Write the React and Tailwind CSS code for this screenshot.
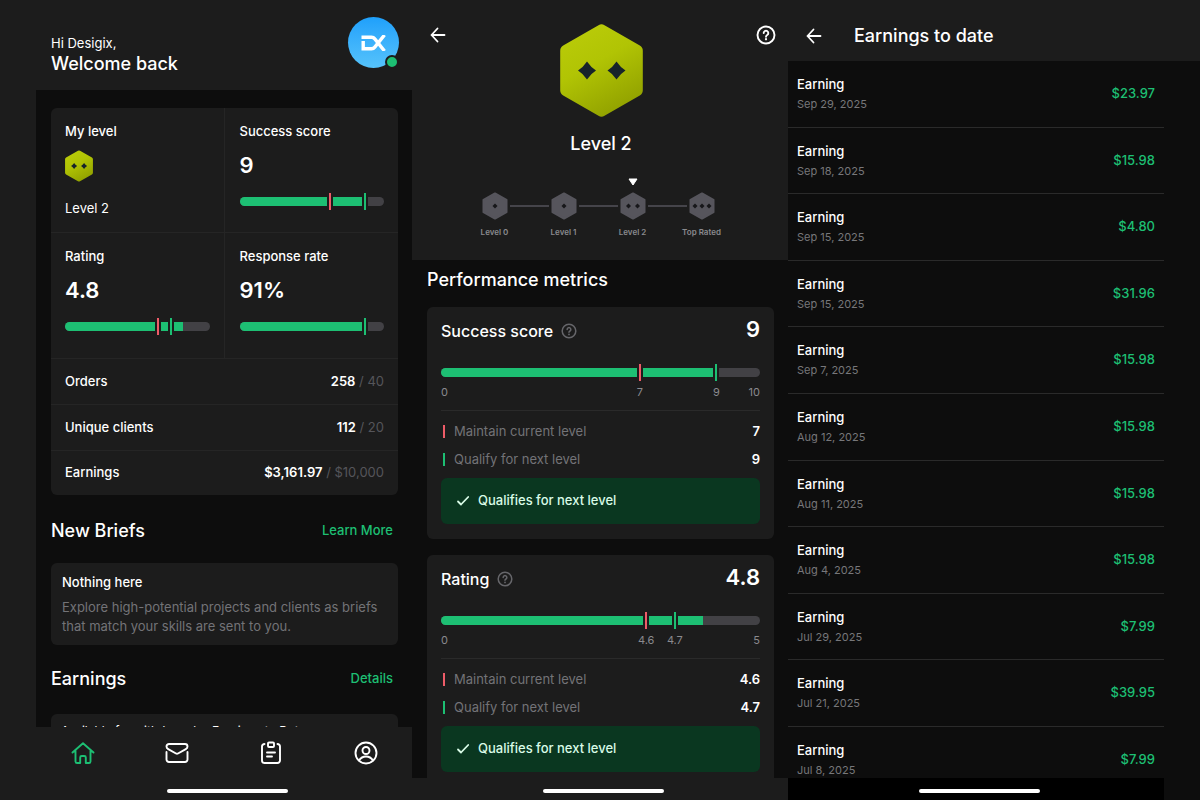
import React from 'react';

const overviewStats = [
  { label: 'Success score', value: '9', fill: 86, red: 62, green: 86 },
  { label: 'Rating', value: '4.8', fill: 82, red: 64, green: 73 },
  { label: 'Response rate', value: '91%', fill: 86, green: 86 },
];

const totals = [
  { label: 'Orders', value: '258', goal: '40' },
  { label: 'Unique clients', value: '112', goal: '20' },
  { label: 'Earnings', value: '$3,161.97', goal: '$10,000' },
];

const levels = [
  { label: 'Level 0', dots: 1 },
  { label: 'Level 1', dots: 1 },
  { label: 'Level 2', dots: 2, current: true },
  { label: 'Top Rated', dots: 3 },
];

const metrics = [
  { label: 'Success score', value: '9', max: '10', fill: 86, red: 62, redLabel: '7', green: 86, greenLabel: '9' },
  { label: 'Rating', value: '4.8', max: '5', fill: 82, red: 64, redLabel: '4.6', green: 73, greenLabel: '4.7' },
];

const earnings = [
  { date: 'Sep 29, 2025', amount: '$23.97' },
  { date: 'Sep 18, 2025', amount: '$15.98' },
  { date: 'Sep 15, 2025', amount: '$4.80' },
  { date: 'Sep 15, 2025', amount: '$31.96' },
  { date: 'Sep 7, 2025', amount: '$15.98' },
  { date: 'Aug 12, 2025', amount: '$15.98' },
  { date: 'Aug 11, 2025', amount: '$15.98' },
  { date: 'Aug 4, 2025', amount: '$15.98' },
  { date: 'Jul 29, 2025', amount: '$7.99' },
  { date: 'Jul 21, 2025', amount: '$39.95' },
  { date: 'Jul 8, 2025', amount: '$7.99' },
];

function LevelBadge({ className }) {
  return (
    <svg viewBox="0 0 83 93" className={className} aria-hidden="true">
      <defs>
        <linearGradient id="badge" x1="0" y1="0" x2="0.5" y2="1">
          <stop offset="0" stopColor="#bccd0a" />
          <stop offset="0.5" stopColor="#b1c404" />
          <stop offset="1" stopColor="#94a400" />
        </linearGradient>
      </defs>
      <path
        d="M38.5 1.2a6 6 0 0 1 6 0L79.8 21.5a6 6 0 0 1 3 5.2V66.3a6 6 0 0 1-3 5.2L44.5 91.8a6 6 0 0 1-6 0L3.2 71.5a6 6 0 0 1-3-5.2V26.7a6 6 0 0 1 3-5.2Z"
        fill="url(#badge)"
      />
      <g fill="#17242a">
        <path d="M27 37.5Q31 43.5 36 46.5Q31 49.5 27 55.5Q23 49.5 18 46.5Q23 43.5 27 37.5Z" />
        <path d="M56.5 37.5Q60.5 43.5 65.5 46.5Q60.5 49.5 56.5 55.5Q52.5 49.5 47.5 46.5Q52.5 43.5 56.5 37.5Z" />
      </g>
    </svg>
  );
}

function StepBadge({ dots }) {
  const xs = { 1: [13], 2: [8.5, 17.5], 3: [6, 13, 20] }[dots];
  return (
    <svg viewBox="0 0 26 28" className="h-7 w-[26px]" aria-hidden="true">
      <path d="M13 1.5 24.5 7.8V20.2L13 26.5 1.5 20.2V7.8Z" fill="#56555c" stroke="#56555c" strokeWidth="2" strokeLinejoin="round" />
      {xs.map((x) => (
        <path key={x} d={`M${x} 11.5l2.5 2.5-2.5 2.5-2.5-2.5Z`} fill="#17171a" />
      ))}
    </svg>
  );
}

function ArrowIcon() {
  return (
    <svg viewBox="0 0 16 16" className="size-4" fill="none" stroke="currentColor" strokeWidth="1.8" strokeLinecap="round" strokeLinejoin="round" aria-hidden="true">
      <path d="M14.5 8H1.5M7.5 1.5 1.5 8 7.5 14.5" />
    </svg>
  );
}

function HelpIcon({ className }) {
  return (
    <svg viewBox="0 0 20 20" className={className} fill="none" stroke="currentColor" strokeWidth="1.9" strokeLinecap="round" strokeLinejoin="round" aria-hidden="true">
      <circle cx="10" cy="10" r="8.5" />
      <path d="M7.7 8a2.3 2.3 0 1 1 3.5 2c-.8.5-1.2.9-1.2 1.7" />
      <path d="M10 14.2v.1" strokeWidth="2.2" />
    </svg>
  );
}

function NavIcon({ children }) {
  return (
    <svg viewBox="0 0 24 24" className="size-6" fill="none" stroke="currentColor" strokeWidth="1.9" strokeLinecap="round" strokeLinejoin="round" aria-hidden="true">
      {children}
    </svg>
  );
}

function Marker({ at, color, label }) {
  return (
    <div className="absolute -top-1 -ml-0.5 flex w-1.5 flex-col items-center" style={{ left: `${at}%` }}>
      <div className="h-[17px] w-1.5 bg-[#1c1c1c] px-0.5">
        <div className={`h-full ${color}`} />
      </div>
      {label && <span className="mt-[3px] text-[11px] leading-4 text-[#8a8a8e]">{label}</span>}
    </div>
  );
}

function Meter({ fill, red, green, redLabel, greenLabel }) {
  return (
    <div className="relative h-[9px]">
      <div className="h-full overflow-hidden rounded-full bg-[#424145]">
        <div className="h-full bg-[#1dbf73]" style={{ width: `${fill}%` }} />
      </div>
      {red && <Marker at={red} color="bg-[#ee5c68]" label={redLabel} />}
      <Marker at={green} color="bg-[#1dbf73]" label={greenLabel} />
    </div>
  );
}

function HomeIndicator() {
  return <div className="ml-1.5 h-1 w-[121px] rounded-full bg-white" />;
}

function StatCell({ stat, className }) {
  return (
    <div className={`pt-3.5 pr-3.5 ${className}`}>
      <h3 className="text-[13px] leading-[18px] font-medium">{stat.label}</h3>
      <p className="mt-2.5 text-[22px] leading-[30px] font-semibold">{stat.value}</p>
      <div className="mt-[17px]">
        <Meter {...stat} />
      </div>
    </div>
  );
}

function OverviewScreen() {
  return (
    <section className="flex min-w-0 flex-1 flex-col">
      <header className="flex h-[90px] shrink-0 items-start justify-between pr-[13px] pl-[15px]">
        <div className="pt-[34px]">
          <p className="text-[13px] leading-[18px]">Hi Desigix,</p>
          <h1 className="text-lg leading-6 font-medium">Welcome back</h1>
        </div>
        <button type="button" aria-label="Account" className="relative mt-[17px] flex size-[51px] items-center justify-center rounded-full bg-linear-to-b from-[#1ea0fb] to-[#55c3fb]">
          <svg viewBox="0 0 26 16" className="h-4 w-[26px]" fill="none" stroke="#fff" strokeWidth="3.4" aria-hidden="true">
            <path d="M.5 2.2H10.5Q12.500 2.200 13.800 3.900L23.500 16" />
            <path d="M2.200 6V13.800H10.500Q12.500 13.800 13.800 12.100L23.500 0" />
          </svg>
          <span className="absolute right-0 -bottom-px size-3.5 rounded-full border-2 border-[#1c1c1c] bg-[#1dbf73]" />
        </button>
      </header>

      <div className="min-h-0 flex-1 overflow-hidden bg-[#0d0d0d] pt-[18px] pr-3.5 pl-[15px]">
        <div className="overflow-hidden rounded-md bg-[#1c1c1c]">
          <div className="grid auto-rows-[125px] grid-cols-2">
            <div className="border-r border-b border-[#252525] px-3.5 pt-3.5">
              <h3 className="text-[13px] leading-[18px] font-medium">My level</h3>
              <LevelBadge className="mt-2.5 h-8 w-7" />
              <p className="mt-[17px] text-[13px] leading-[18px]">Level 2</p>
            </div>
            <StatCell stat={overviewStats[0]} className="border-b border-[#252525] pl-[15px]" />
            <StatCell stat={overviewStats[1]} className="border-r border-[#252525] pl-3.5" />
            <StatCell stat={overviewStats[2]} className="pl-[15px]" />
          </div>
          {totals.map((row) => (
            <div key={row.label} className="flex h-[46px] items-center justify-between border-t border-[#252525] px-3.5 text-[13px] font-medium last:h-[45px]">
              <span>{row.label}</span>
              <span className="font-normal text-[#55555a]">
                <b className="font-semibold text-white">{row.value}</b> / {row.goal}
              </span>
            </div>
          ))}
        </div>

        <div className="mt-6 flex items-center justify-between pr-[5px]">
          <h2 className="text-lg leading-6 font-medium">New Briefs</h2>
          <a href="#briefs" className="text-[13px] font-medium text-[#1dbf73]">Learn More</a>
        </div>
        <div className="mt-5 rounded-md bg-[#1c1c1c] px-[11px] pt-2.5 pb-[9px] text-[13px] leading-[19px]">
          <h3 className="font-medium">Nothing here</h3>
          <p className="mt-1.5 text-[#737377]">
            Explore high-potential projects and clients as briefs that match your skills are sent to you.
          </p>
        </div>

        <div className="mt-[22px] flex items-center justify-between pr-[5px]">
          <h2 className="text-lg leading-6 font-medium">Earnings</h2>
          <a href="#earnings" className="text-[13px] font-medium text-[#1dbf73]">Details</a>
        </div>
        <div className="mt-[23px] flex h-20 gap-4 rounded-md bg-[#1c1c1c] pt-2 pl-2.5 text-xs leading-[18px]">
          <span>Available for withdrawal</span>
          <span>Earnings to Date</span>
        </div>
      </div>

      <nav className="flex h-[51px] shrink-0 items-center">
        <a href="#home" aria-label="Home" className="flex flex-1 justify-center text-[#1dbf73]">
          <NavIcon>
            <path d="M1.5 11.5 12 2.2 22.5 11.5M4.5 10V20.5A1.5 1.5 0 0 0 6 22H9.2V16.5A1.5 1.5 0 0 1 10.7 15H13.3A1.5 1.5 0 0 1 14.8 16.5V22H18A1.5 1.5 0 0 0 19.5 20.5V10" />
          </NavIcon>
        </a>
        <a href="#inbox" aria-label="Inbox" className="flex flex-1 justify-center pl-px">
          <NavIcon>
            <path d="M1.5 11V18.5A2.5 2.5 0 0 0 4 21H20A2.5 2.5 0 0 0 22.5 18.5V11M4 3H20A2.5 2.5 0 0 1 22.5 5.5C22.5 6.8 21.9 7.5 20.8 8.1L13 12.5A2 2 0 0 1 11 12.5L3.2 8.1C2.1 7.5 1.5 6.8 1.5 5.5A2.5 2.5 0 0 1 4 3Z" />
          </NavIcon>
        </a>
        <a href="#orders" aria-label="Orders" className="flex flex-1 justify-center pl-px">
          <NavIcon>
            <path d="M5.5 3A2.5 2.5 0 0 0 3 5.5V19.5A2.5 2.5 0 0 0 5.5 22H18.5A2.5 2.5 0 0 0 21 19.5V5.5A2.5 2.5 0 0 0 18.5 3M10 1.5H14A1 1 0 0 1 15 2.5V5A1 1 0 0 1 14 6H10A1 1 0 0 1 9 5V2.5A1 1 0 0 1 10 1.5ZM8 11.5H16M8 15.5H13" />
          </NavIcon>
        </a>
        <a href="#profile" aria-label="Profile" className="flex flex-1 justify-center pl-0.5">
          <NavIcon>
            <circle cx="12" cy="12" r="10.5" />
            <circle cx="12" cy="9.5" r="3.5" />
            <path d="M5 19.5Q7.5 15.5 12 15.5T19 19.5" />
          </NavIcon>
        </a>
      </nav>
      <footer className="flex h-[22px] shrink-0 justify-center pt-[11px]">
        <HomeIndicator />
      </footer>
    </section>
  );
}

function MetricCard({ metric }) {
  return (
    <article className="rounded-md bg-[#1c1c1c] px-3.5 pt-1.5 pb-[15px]">
      <div className="flex h-8 items-center justify-between">
        <h3 className="flex items-center gap-2 pt-1 text-base leading-6 font-medium">
          {metric.label}
          <HelpIcon className="size-4 text-[#66666a]" />
        </h3>
        <p className="text-[22px] leading-7 font-semibold">{metric.value}</p>
      </div>
      <div className="mt-[23px]">
        <Meter {...metric} />
      </div>
      <div className="mt-[7px] flex justify-between text-[11px] leading-4 text-[#8a8a8e]">
        <span>0</span>
        <span>{metric.max}</span>
      </div>
      <dl className="mt-2.5 border-t border-[#2a2a2a] pt-1.5 text-[13px] leading-7">
        <div className="flex items-center">
          <dt className="flex flex-1 items-center gap-[9px] text-[#737377]">
            <span className="ml-0.5 h-[13px] w-0.5 bg-[#ee5c68]" />
            Maintain current level
          </dt>
          <dd className="font-semibold">{metric.redLabel}</dd>
        </div>
        <div className="flex items-center">
          <dt className="flex flex-1 items-center gap-[9px] text-[#737377]">
            <span className="ml-0.5 h-[13px] w-0.5 bg-[#1dbf73]" />
            Qualify for next level
          </dt>
          <dd className="font-semibold">{metric.greenLabel}</dd>
        </div>
      </dl>
      <p className="mt-[5px] flex h-[46px] items-center gap-2 rounded-md bg-[#0a3720] px-[15px] text-[13px] font-medium text-[#d9fbe7]">
        <svg viewBox="0 0 14 14" className="size-3.5" fill="none" stroke="currentColor" strokeWidth="1.8" strokeLinecap="round" strokeLinejoin="round" aria-hidden="true">
          <path d="M2 7.5 5 10.5 12.2 3" />
        </svg>
        Qualifies for next level
      </p>
    </article>
  );
}

function LevelScreen() {
  return (
    <section className="flex min-w-0 flex-1 flex-col">
      <header className="h-[260px] shrink-0 px-3 pt-6">
        <div className="flex items-start justify-between">
          <button type="button" aria-label="Back" className="mt-[3px] pl-1.5">
            <ArrowIcon />
          </button>
          <LevelBadge className="h-[93px] w-[83px]" />
          <button type="button" aria-label="Help" className="mt-px">
            <HelpIcon className="size-5" />
          </button>
        </div>
        <h2 className="mt-[13px] pl-0.5 text-center text-lg leading-7 font-medium">Level 2</h2>
        <ol className="mx-auto mt-5 flex w-[237px] items-start pr-1">
          {levels.map((level, i) => (
            <React.Fragment key={level.label}>
              {i > 0 && <li aria-hidden="true" className="mx-0.5 mt-[27px] h-0.5 flex-1 bg-[#45444a]" />}
              <li className="flex w-[26px] shrink-0 flex-col items-center">
                <svg viewBox="0 0 10 8" className="mb-1.5 h-2 w-2.5" aria-hidden="true">
                  {level.current && <path d="M1 1H9L5 7Z" fill="#fff" stroke="#fff" strokeLinejoin="round" />}
                </svg>
                <StepBadge dots={level.dots} />
                <span className="mt-1.5 text-[8px] leading-3 font-semibold whitespace-nowrap text-[#8a8a8e]">{level.label}</span>
              </li>
            </React.Fragment>
          ))}
        </ol>
      </header>

      <div className="min-h-0 flex-1 overflow-hidden bg-[#0d0d0d] pt-2 pr-3.5 pl-[15px]">
        <h2 className="text-lg leading-6 font-medium">Performance metrics</h2>
        <div className="mt-[15px] flex flex-col gap-4">
          {metrics.map((metric) => (
            <MetricCard key={metric.label} metric={metric} />
          ))}
        </div>
      </div>
      <footer className="flex h-[22px] shrink-0 justify-center pt-[11px]">
        <HomeIndicator />
      </footer>
    </section>
  );
}

function EarningsScreen() {
  return (
    <section className="flex min-w-0 flex-1 flex-col">
      <header className="flex h-[61px] shrink-0 items-center gap-8 pt-2.5 pl-[18px]">
        <button type="button" aria-label="Back">
          <ArrowIcon />
        </button>
        <h2 className="text-lg leading-6 font-medium">Earnings to date</h2>
      </header>
      <ul className="flex min-h-0 flex-1 flex-col overflow-hidden bg-[#0d0d0d]">
        {earnings.map((item) => (
          <li
            key={item.date + item.amount}
            className="flex min-h-0 flex-1 justify-between border-b border-[#2a2a2a] px-[9px] pt-3.5 last:h-[51px] last:flex-none last:overflow-hidden last:border-b-0"
          >
            <div>
              <h3 className="text-[13px] leading-[19px] font-medium">Earning</h3>
              <p className="text-[11px] leading-5 text-[#77777a]">{item.date}</p>
            </div>
            <span className="pt-[9px] text-[13px] leading-[19px] font-medium text-[#1dbf73]">{item.amount}</span>
          </li>
        ))}
      </ul>
      <footer className="flex h-[22px] shrink-0 justify-center bg-black pt-[11px]">
        <HomeIndicator />
      </footer>
    </section>
  );
}

export default function App() {
  return (
    <main className="flex h-screen overflow-hidden bg-[#1c1c1c] pl-9 font-['Inter','Liberation_Sans',sans-serif] text-white">
      <OverviewScreen />
      <LevelScreen />
      <EarningsScreen />
      <div className="mt-[61px] w-9 bg-[#0d0d0d]" />
    </main>
  );
}
